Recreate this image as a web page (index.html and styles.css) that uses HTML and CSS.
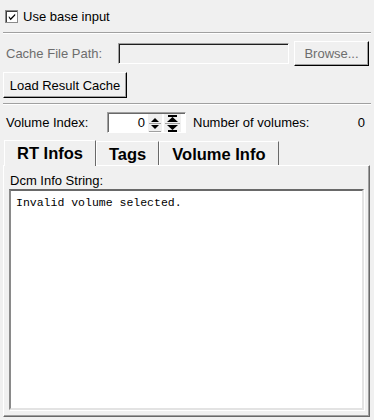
FILE: index.html
```html
<!DOCTYPE html>
<html lang="en">
  <head>
  <meta charset="utf-8">
  <meta name="viewport" content="width=device-width, initial-scale=1">
  <title>RT Infos</title>
  <link rel="stylesheet" href="styles.css">
  </head>
  <body>
    <div class="panel">
      <label class="check-row">
        <span class="check">
          <svg width="11" height="11" viewBox="0 0 11 11"><path d="M2 5 L4 7.5 L9 2.5 L9 4.5 L4 9.5 L2 7 Z" fill="#000"/></svg>
        </span>
        Use base input
      </label>

      <div class="sep"></div>

      <div class="row cache-row">
        <span class="label disabled cache-label">Cache File Path:</span>
        <div class="field"></div>
        <button class="btn browse" disabled>Browse...</button>
      </div>

      <div class="row load-row">
        <button class="btn load">Load Result Cache</button>
      </div>

      <div class="sep sep-low"></div>

      <div class="row volume-row">
        <span class="label volume-label">Volume Index:</span>
        <div class="spin">
          <span class="spin-value">0</span>
          <span class="spin-btn">
            <svg width="14" height="19" viewBox="0 0 14 19">
              <path d="M3 8 L11 8 L7 4 Z" fill="#000"/>
              <rect x="1" y="9" width="12" height="1" fill="#a0a0a0"/>
              <path d="M3 11 L11 11 L7 15 Z" fill="#000"/>
              <rect x="1" y="17" width="12" height="1" fill="#a0a0a0"/>
            </svg>
          </span>
          <span class="spin-btn wide">
            <svg width="17" height="19" viewBox="0 0 17 19">
              <rect x="4" y="1" width="9" height="2" fill="#000"/>
              <path d="M3 8 L14 8 L8.5 3 Z" fill="#000"/>
              <rect x="1" y="9" width="15" height="1" fill="#a0a0a0"/>
              <path d="M3 11 L14 11 L8.5 16 Z" fill="#000"/>
              <rect x="4" y="16" width="9" height="2" fill="#000"/>
            </svg>
          </span>
        </div>
        <span class="label count-label">Number of volumes:</span>
        <span class="count">0</span>
      </div>

      <div class="tabs">
        <div class="tab active">RT Infos</div>
        <div class="tab">Tags</div>
        <div class="tab">Volume Info</div>
      </div>

      <div class="tab-page">
        <div class="page-label">Dcm Info String:</div>
        <div class="text-box">Invalid volume selected.</div>
      </div>
    </div>
  </body>
</html>
```

FILE: styles.css
```css
* {
  margin: 0;
  padding: 0;
  box-sizing: border-box;
}

body {
  font-family: 'Liberation Sans', Arial, sans-serif;
  font-size: 13px;
  color: #000;
  background: #f0f0f0;
  width: 374px;
  height: 420px;
  overflow: hidden;
}

.panel {
  height: 420px;
  padding: 0 3px 3px;
  display: flex;
  flex-direction: column;
}

/* checkbox */
.check-row {
  height: 32px;
  display: flex;
  align-items: center;
  gap: 5px;
  padding-left: 2px;
}

.check {
  width: 13px;
  height: 13px;
  background: #fff;
  border: 1px solid #8a8a8a;
  box-shadow: inset 1px 1px 0 #3c3c3c;
  display: flex;
  align-items: center;
  justify-content: center;
}

.check svg {
  display: block;
  margin: 1px 0 0 1px;
}

.sep {
  border-top: 1px solid #a0a0a0;
  border-bottom: 1px solid #fff;
}

.sep-low {
  margin-top: 5px;
}

.row {
  display: flex;
  align-items: center;
}

.label {
  padding-left: 3px;
  white-space: nowrap;
}

.disabled {
  color: #6d6d6d;
}

/* cache path */
.cache-row {
  padding-top: 7px;
}

.cache-label {
  width: 115px;
}

.field {
  width: 171px;
  height: 21px;
  border: 1px solid;
  border-color: #a0a0a0 #fff #fff #a0a0a0;
  box-shadow: inset 1px 1px 0 #1e1e1e;
  background: #f0f0f0;
}

.btn {
  font-family: inherit;
  font-size: 13px;
  color: #000;
  background: #f0f0f0;
  border: 1px solid;
  border-color: #fff #000 #000 #fff;
  box-shadow: inset -1px -1px 0 #a0a0a0;
}

.btn:disabled {
  color: #6d6d6d;
}

.browse {
  width: 75px;
  height: 25px;
  margin-left: 5px;
}

.load-row {
  margin-top: 6px;
}

.load {
  width: 124px;
  height: 26px;
}

/* volume index */
.volume-row {
  padding-top: 7px;
}

.volume-label {
  width: 104px;
}

.spin {
  width: 79px;
  height: 21px;
  display: flex;
  align-items: stretch;
  background: #fff;
  border: 1px solid;
  border-color: #a0a0a0 #fff #fff #a0a0a0;
  box-shadow: inset 1px 1px 0 #696969;
}

.spin-value {
  width: 39px;
  text-align: right;
  padding-right: 2px;
  line-height: 19px;
}

.spin-btn {
  width: 14px;
  background: #f0f0f0;
  margin: 1px 0 0 1px;
  display: flex;
}

.spin-btn.wide {
  width: 17px;
  margin-left: 2px;
}

.spin-btn svg {
  display: block;
}

.count-label {
  margin-left: 4px;
}

.count {
  margin-left: auto;
  padding-right: 6px;
}

/* tabs */
.tabs {
  display: flex;
  margin-top: 7px;
  height: 25px;
  padding-left: 1px;
}

.tab {
  font-size: 16.5px;
  font-weight: bold;
  height: 25px;
  line-height: 24px;
  padding: 0 12px;
  border-top: 1px solid #fff;
  border-left: 1px solid #fff;
  border-right: 1px solid #696969;
  margin-top: 1px;
  white-space: nowrap;
}

.tab.active {
  margin-top: 0;
  height: 26px;
  margin-bottom: -1px;
  position: relative;
  z-index: 1;
  background: #f0f0f0;
}

.tab-page {
  flex: 1;
  display: flex;
  flex-direction: column;
  border: 1px solid;
  border-color: #fff #696969 #696969 #fff;
  box-shadow: inset -1px -1px 0 #a0a0a0;
  padding: 8px 5px 6px 5px;
  margin-right: 1px;
}

.page-label {
  padding-left: 1px;
  line-height: 14px;
  margin-bottom: 1px;
}

.text-box {
  flex: 1;
  background: #fff;
  border: 2px solid;
  border-color: #696969 #e3e3e3 #e3e3e3 #8a8a8a;
  box-shadow: 1px 1px 0 #fff;
  font-family: 'Liberation Mono', 'Courier New', monospace;
  font-size: 11.5px;
  line-height: 13px;
  padding: 5px 5px;
}
```
